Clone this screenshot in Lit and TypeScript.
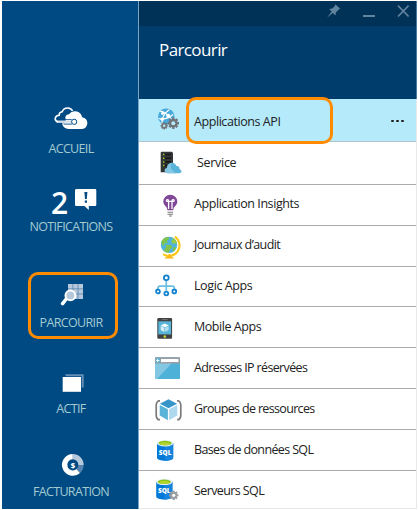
import { LitElement, html, css, svg } from "lit";
import { customElement, property } from "lit/decorators.js";
import { classMap } from "lit/directives/class-map.js";
import { styleMap } from "lit/directives/style-map.js";

const gear = (cx: number, cy: number, r: number, color: string, hole: string) => svg`
  <g transform="translate(${cx} ${cy})">
    ${[0, 45, 90, 135].map((a) => svg`<rect x=${-r} y=${-r * 0.22} width=${r * 2} height=${r * 0.44} fill=${color} transform="rotate(${a})"/>`)}
    <circle r=${r * 0.72} fill=${color}/><circle r=${r * 0.34} fill=${hole}/>
  </g>`;

const sql = (dx: number, dy: number) => svg`
  <g transform="translate(${dx} ${dy})">
    <path d="M0 3V17.7C0 21.7 16.2 21.7 16.2 17.7V3Z" fill="#0078d7"/>
    <path d="M8 3V20.7C12.5 20.7 16.2 19.7 16.2 17.7V3Z" fill="#1684dc"/>
    <ellipse cx="8.1" cy="3.2" rx="8.1" ry="3.2" fill="#e4f1f8"/>
    <ellipse cx="8.1" cy="3.1" rx="6.6" ry="2.3" fill="#8cc418"/>
    <ellipse cx="8.1" cy="3.7" rx="4.8" ry="1.3" fill="#b8d432"/>
    <text x="8.1" y="14.8" text-anchor="middle" textLength="12.6" lengthAdjust="spacingAndGlyphs" font-family="Open Sans, sans-serif" font-weight="800" font-size="7.6" fill="#fff">SQL</text>
  </g>`;

const icons: Record<string, unknown> = {
  api: svg`
    <circle cx="12.3" cy="9.6" r="8.2" fill="#48a9dc"/>
    <path d="M6.2 4.5Q11 4 18 13M8 16.5Q7.5 8 15.5 2.5M5 11.5Q12 13.5 19 7.5" fill="none" stroke="#fff" stroke-width="1.2"/>
    <circle cx="8.6" cy="6.2" r="1.5" fill="#fff"/><circle cx="14.2" cy="8.8" r="2" fill="#fff"/><circle cx="8.3" cy="12.2" r="1.7" fill="#fff"/>
    ${gear(19.3, 16.2, 5.7, "#707379", "#b4eafa")}${gear(10.2, 18.8, 3.6, "#707379", "#b4eafa")}`,
  service: svg`
    <path d="M7.5 1.7H18L19 3V22.3H6.7V2.5Z" fill="#333536"/>
    <path d="M9 4.5H17M9 8.2H17M9 11.9H17M9 15.6H13" stroke="#171818" stroke-width="1.6"/>
    <path d="M9 4.5H10.5M9 8.2H10.5M9 11.9H10.5M9 15.6H10.5" stroke="#a4cf31" stroke-width="1.5"/>
    <path d="M14 23.2C10 23.2 9.6 18.6 13 17.9C13.2 12.5 20.3 10.8 22.4 16C25 15.8 25.8 17.7 25.4 19.2C28.3 19.7 28 23.2 25.4 23.2Z" fill="#59b4d9"/>
    <path d="M14 23.2C10 23.2 9.6 18.6 13 17.9C13.2 14.5 16 12.8 18.4 13.2C15 16 17 20 22 23.2Z" fill="#83c7e2"/>`,
  insights: svg`
    <path d="M13.3 18.2C13.3 14 9.3 14 9.3 9.6A7 6.8 0 0 1 23.3 9.6C23.3 14 19.3 14 19.3 18.2Z" fill="#804998"/>
    <path d="M14.6 17V9.4H12.8Q12 8.5 12.8 7.7Q14.4 7 14.7 9.4H17.9Q18.2 7 19.8 7.7Q20.6 8.5 19.8 9.4H18V17" fill="none" stroke="#fff" stroke-width="1.25"/>
    <path d="M13.5 20.3H19.1M13.5 22.2H19.1M15 24H17.8" stroke="#7a7a7a" stroke-width="1.1"/>`,
  audit: svg`
    <path d="M20.9 3.7A10 10 0 0 1 9 21.2" fill="none" stroke="#fcc719" stroke-width="2"/>
    <path d="M15.5 21V24" stroke="#fcb713" stroke-width="2"/><path d="M10.5 25.6L12.5 23.6H18L20 25.6Z" fill="#fcb713"/>
    <circle cx="15" cy="11.9" r="8.2" fill="#4eb4df"/>
    <path d="M7.2 9.3Q8.8 4.8 13 3.9L15.6 5L14 7L12.5 8L14 9.7L10.8 10.3L9 13.4Z" fill="#82c34a"/>
    <path d="M17.8 4.2Q22.7 6.3 23 11.2L20 10L18.7 11.4L17.3 8L19 6.8Z" fill="#97cb48"/>
    <path d="M12 11.8L16.7 12L18.4 14L16 16.2L14.5 19.9Q11.6 19.3 9.4 17.4L12 14.7Z" fill="#82c34a"/>
    <path d="M19.8 14L22.5 14.5Q21.5 17 19 18.8L18.5 16.5Z" fill="#82c34a"/>`,
  logic: svg`
    <path d="M12.3 5.5V16.8M4 14.8V14.2Q4 12.2 6 12.2H18.3Q20.3 12.2 20.3 14.2V14.8" fill="none" stroke="#6bbfe1" stroke-width="1.7"/>
    ${[[12.3, 3.7], [4, 17.4], [12.3, 19.5], [20.3, 17.4]].map(([x, y], i) => svg`<circle cx=${x} cy=${y} r=${i ? 1.9 : 2.4} fill="#fff" stroke="#1082cf" stroke-width="1.8"/>`)}`,
  mobile: svg`
    <rect x="3.3" y="4" width="14.8" height="20.8" rx="1.2" fill="#3f4143"/>
    <rect x="4.3" y="7.3" width="12.8" height="13.1" fill="#59b4d9"/>
    <path d="M7.7 5.6H13.7" stroke="#77797b" stroke-width=".9"/>
    <path d="M10.7 9.6L14.7 11.4L10.7 13.3L6.7 11.4Z" fill="#fff"/><path d="M6.7 12V16L10.3 18V13.8Z" fill="#d9eff7"/><path d="M14.7 12V16L11.1 18V13.8Z" fill="#b5dfee"/>
    <circle cx="10.8" cy="22.6" r="1.3" fill="#b8d432"/>`,
  address: svg`
    <rect x="1" y="2.3" width="25" height="21.7" rx=".8" fill="#4eb1d8"/>
    <path d="M1 8H18L3 24H1Z" fill="#83c7e2"/>
    <path d="M1 8.6V3Q1 2.3 1.8 2.3H25.2Q26 2.3 26 3V8.6Z" fill="#9b9fa3"/>
    <rect x="7" y="4" width="17.4" height="3" fill="#fff"/>
    <circle cx="4" cy="5.5" r="2.4" fill="#59b4d9"/><path d="M5.4 5.5H2.7M4 4.1L2.6 5.5L4 6.9" fill="none" stroke="#fff" stroke-width="1"/>`,
  groups: svg`
    <path d="M6 4.9H4.3Q2.2 6 2.2 9V19Q2.2 22.5 4.3 23.7H6M23.1 4.9H24.7Q26.8 6 26.8 9V19Q26.8 22.5 24.7 23.7H23.1" fill="none" stroke="#7b7b7b" stroke-width="1.7"/>
    <path d="M14.5 3.3L23.1 7.8L14.5 12.3L5.9 7.8Z" fill="#3795c9"/>
    <path d="M5.7 9L13.9 13.3V24.2L5.7 19.5Z" fill="#5ab4da"/><path d="M23.3 9L15.1 13.3V24.2L23.3 19.5Z" fill="#add8ed"/>`,
  database: sql(3, 3),
  server: svg`${sql(2.2, 1.7)}${gear(19.7, 18.3, 4.7, "#999da1", "#fff")}`,
  home: svg`
    <path d="M3.6 15.8Q1 15 1.2 12.4Q1.8 9.2 5.2 9.2Q5 6.2 8.2 5.8Q9.6 1.9 13.8 2Q17.2 2.2 18.6 4.8" fill="none" stroke="#fff" stroke-width="1.6"/>
    <path d="M11.6 13.8Q10.4 8.6 15 8.2Q17.3 4.9 21.5 5.3Q26.8 5.6 28.2 11.2Q33.3 12.2 33.4 17Q33 22.5 28 23H14.5Q9.5 22.6 8 17.8L11.6 16Z" fill="#fff"/>
    <path d="M8.3 13.7H17.8M9.6 18.1H17.9" stroke="#004a84" stroke-width=".9"/>
    <path d="M2.6 15.7H18" stroke="#fff" stroke-width="2.2"/><path d="M4 15.9H17.4" stroke="#6d98bd" stroke-width=".5"/>
    <circle cx="20.2" cy="15.8" r="2.6" fill="#fff" stroke="#004a84" stroke-width="1"/>`,
  bubble: svg`
    <path d="M2 0H20Q21.3 0 21.3 1.3V15.7Q21.3 17 20 17H13.8V21L9.5 17H1.3Q0 17 0 15.7V1.3Q0 0 2 0Z" fill="#fff"/>
    <path d="M9.4 3H12.4L11.8 10H10ZM9.8 11.6H12V13.8H9.8Z" fill="#004a84"/>`,
  browse: svg`
    <path d="M13 2H28V17H13Z" fill="#b6c9dc"/><path d="M17.9 2V17M23 2V17M13 6.8H28M13 12H28" stroke="#5886ae" stroke-width=".8"/>
    <path d="M12 16L7.6 21.6" stroke="#fff" stroke-width="3.5" stroke-linecap="round"/>
    <circle cx="15.4" cy="13.4" r="4.9" fill="#b6c9dc" stroke="#fff" stroke-width="2"/>`,
  active: svg`
    <path d="M10.5 4.2H27.7V16.5" fill="none" stroke="#668fb5" stroke-width="2"/><rect x="7.7" y="6" width="18.3" height="14.8" fill="#fff"/>`,
  billing: svg`
    <path d="M17.8 3.7A8.2 8.2 0 1 0 23.3 18" fill="none" stroke="#fff" stroke-width="5.3"/>
    <path d="M17.8 3.7A8.2 8.2 0 0 1 26 11.9" fill="none" stroke="#b6c9dc" stroke-width="5.3"/>
    <path d="M26 11.9A8.2 8.2 0 0 1 23.3 18" fill="none" stroke="#5585af" stroke-width="5.3"/>
    <text x="17.8" y="14.8" text-anchor="middle" font-family="Open Sans, sans-serif" font-size="7.5" font-weight="800" fill="#fff">$</text>`,
};

@customElement("hub-item")
class HubItem extends LitElement {
  @property() icon = "";
  @property() label = "";
  @property() count = "";
  static styles = css`
    :host { display: flex; flex-direction: column; align-items: center; color: #a3cbd0; }
    .art { height: 24px; display: flex; align-items: flex-start; padding-left: var(--shift, 2px); }
    .big { width: 35px; height: 24px; }
    .bubble { width: 22px; height: 22px; }
    .count { width: 24px; margin-top: 2px; font: 600 30px/24px "Open Sans", sans-serif; color: #fff; }
    .label { margin-top: var(--gap); height: 18px; font: 12.5px/18px "Open Sans", sans-serif; letter-spacing: -0.65px; white-space: nowrap; }
  `;
  render() {
    return html`<div class="art">
        ${this.count ? html`<span class="count">${this.count}</span>` : ""}
        <svg class=${this.count ? "bubble" : "big"} viewBox=${this.count ? "0 0 22 22" : "0 0 35 24"}>${icons[this.icon]}</svg>
      </div><span class="label">${this.label}</span>`;
  }
}

@customElement("browse-row")
class BrowseRow extends LitElement {
  @property() icon = "";
  @property() label = "";
  @property({ type: Number }) track = 0;
  @property({ type: Number }) lift = 0;
  @property({ type: Boolean, reflect: true }) selected = false;
  static styles = css`
    :host { display: flex; align-items: center; box-sizing: border-box; position: relative; padding-left: 15px; border-bottom: 1px solid #a9abae; background: #fff; color: #222; }
    :host([selected]) { background: #b4eafa; border-color: #b3c3cc; }
    .icon { width: 28px; height: 26px; flex: none; }
    .label { flex: 1; margin-left: var(--inset, 12px); font: 12.5px/18px "Open Sans", sans-serif; white-space: nowrap; }
    .more { display: flex; gap: 2.5px; margin: 2px 12px 0 0; }
    .dot { width: 2.6px; height: 2.6px; border-radius: 50%; background: #222; }
    .ring { position: absolute; left: 47px; top: -2px; width: 147px; height: 47px; box-sizing: border-box; border: 3px solid #ff8c00; border-radius: 10px; z-index: 2; }
  `;
  render() {
    const fit = { letterSpacing: `${this.track}px`, paddingTop: `${Math.max(0, this.lift) * 2}px`, paddingBottom: `${Math.max(0, -this.lift) * 2}px` };
    return html`<svg class="icon" viewBox="0 0 28 26">${icons[this.icon]}</svg>
      <span class="label" style=${styleMap(fit)}>${this.label}</span>
      ${this.selected ? html`<span class="more"><i class="dot"></i><i class="dot"></i><i class="dot"></i></span><div class="ring"></div>` : ""}`;
  }
}

@customElement("app-root")
class AppRoot extends LitElement {
  static styles = css`
    :host { display: flex; box-sizing: border-box; width: 418px; height: 510px; padding: 1px 1px 1px 2px; background: #fff; overflow: hidden; }
    .hub { width: 136px; flex: none; box-sizing: border-box; padding: 105px 0 0 2px; background: #004a84; display: grid; grid-template-rows: 83px 93px 89px 82px 56px; position: relative; }
    .home { --gap: 10px; --shift: 0; } .notes { --gap: 5px; --shift: 6px; } .find { --gap: 8px; } .active { --gap: 5px; } .bill { --gap: 6px; }
    .ring { position: absolute; left: 26px; top: 271px; width: 90px; height: 67px; box-sizing: border-box; border: 3px solid #ff8c00; border-radius: 10px; }
    .blade { flex: 1; display: flex; flex-direction: column; box-sizing: border-box; border-left: 1px solid #7ba3c6; border-right: 1px solid #e7e9ec; }
    .bar { height: 25px; flex: none; background: #003156; display: flex; justify-content: flex-end; border-right: 1px solid #4d7a9f; margin-right: -1px; }
    .tools { width: 92px; height: 25px; }
    .head { height: 73px; flex: none; box-sizing: border-box; padding: 12px 0 0 20px; background: #003d6d; color: #fff; font: 17px/24px "Open Sans", sans-serif; letter-spacing: -0.6px; border-right: 1px solid #4d7a9f; margin-right: -1px; }
    .rows { display: grid; grid-template-rows: 43px 43px 41px 41px 40px 41px 41px 41px 41px 38px; }
    .soft { border-bottom-color: #e9e9e9; }
    .inset { --inset: 15px; }
  `;
  render() {
    const rows: [string, string, number, number][] = [
      ["api", "Applications API", -0.43, 2], ["service", "Service", -0.3, 0], ["insights", "Application Insights", -0.43, -1],
      ["audit", "Journaux d’audit", -0.57, -1], ["logic", "Logic Apps", -0.4, -1], ["mobile", "Mobile Apps", -0.45, 0],
      ["address", "Adresses IP réservées", -0.63, 0], ["groups", "Groupes de ressources", -0.66, 0],
      ["database", "Bases de données SQL", -0.63, 0], ["server", "Serveurs SQL", -0.6, 1],
    ];
    return html`
      <nav class="hub">
        <hub-item class="home" icon="home" label="ACCUEIL"></hub-item>
        <hub-item class="notes" icon="bubble" count="2" label="NOTIFICATIONS"></hub-item>
        <hub-item class="find" icon="browse" label="PARCOURIR"></hub-item>
        <hub-item class="active" icon="active" label="ACTIF"></hub-item>
        <hub-item class="bill" icon="billing" label="FACTURATION"></hub-item>
        <div class="ring"></div>
      </nav>
      <main class="blade">
        <div class="bar"><svg class="tools" viewBox="0 0 92 25">
          <path d="M11.3 3.2L16.2 7.7L14.8 8.4L11.8 11.4L11.6 14.5L8.8 12L3.2 16.6L7.6 10.6L5 8L8.3 7.6L11 4.8Z" fill="#61849f"/>
          <path d="M39 15H51" stroke="#61849f" stroke-width="2"/>
          <path d="M74 4.7L84.6 15.5M84.6 4.7L74 15.5" stroke="#61849f" stroke-width="1.7"/>
        </svg></div>
        <div class="head">Parcourir</div>
        <div class="rows">
          ${rows.map(([icon, label, track, lift], i) => html`<browse-row class=${classMap({ soft: i === 9, inset: i === 1 })} icon=${icon} label=${label} track=${track} lift=${lift} ?selected=${i === 0}></browse-row>`)}
        </div>
      </main>`;
  }
}
